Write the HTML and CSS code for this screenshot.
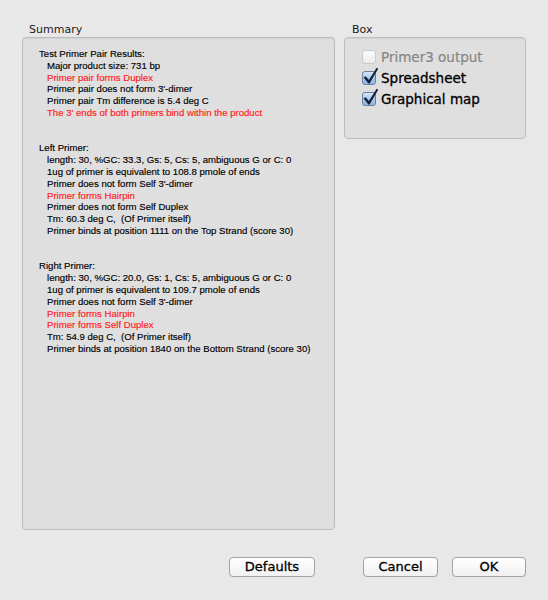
FILE: index.html
```html
<!DOCTYPE html>
<html lang="en">

<head>
    <meta charset="UTF-8">
    <meta name="viewport" content="width=device-width, initial-scale=1.0">
    <title>Test Primer Pair</title>
    <link rel="stylesheet" href="styles.css">
</head>

<body>
    <div class="dialog">
        <div class="panels">
            <section class="group group-summary">
                <div class="group-label">Summary</div>
                <div class="frame summary">
                    <div class="line">Test Primer Pair Results:</div>
                    <div class="line sub">Major product size: 731 bp</div>
                    <div class="line sub warn">Primer pair forms Duplex</div>
                    <div class="line sub">Primer pair does not form 3'-dimer</div>
                    <div class="line sub">Primer pair Tm difference is 5.4 deg C</div>
                    <div class="line sub warn">The 3' ends of both primers bind within the product</div>
                    <div class="line"></div>
                    <div class="line"></div>
                    <div class="line">Left Primer:</div>
                    <div class="line sub">length: 30, %GC: 33.3, Gs: 5, Cs: 5, ambiguous G or C: 0</div>
                    <div class="line sub">1ug of primer is equivalent to 108.8 pmole of ends</div>
                    <div class="line sub">Primer does not form Self 3'-dimer</div>
                    <div class="line sub warn">Primer forms Hairpin</div>
                    <div class="line sub">Primer does not form Self Duplex</div>
                    <div class="line sub">Tm: 60.3 deg C,&nbsp; (Of Primer itself)</div>
                    <div class="line sub">Primer binds at position 1111 on the Top Strand (score 30)</div>
                    <div class="line"></div>
                    <div class="line"></div>
                    <div class="line">Right Primer:</div>
                    <div class="line sub">length: 30, %GC: 20.0, Gs: 1, Cs: 5, ambiguous G or C: 0</div>
                    <div class="line sub">1ug of primer is equivalent to 109.7 pmole of ends</div>
                    <div class="line sub">Primer does not form Self 3'-dimer</div>
                    <div class="line sub warn">Primer forms Hairpin</div>
                    <div class="line sub warn">Primer forms Self Duplex</div>
                    <div class="line sub">Tm: 54.9 deg C,&nbsp; (Of Primer itself)</div>
                    <div class="line sub">Primer binds at position 1840 on the Bottom Strand (score 30)</div>
                </div>
            </section>

            <section class="group group-box">
                <div class="group-label">Box</div>
                <div class="frame options">
                    <label class="option disabled">
                        <span class="check"></span>
                        <span>Primer3 output</span>
                    </label>
                    <label class="option">
                        <span class="check on">
                            <svg class="tick" width="14" height="14" viewBox="0 0 14 14">
                                <path d="M1.6 6.6 L3.6 5.2 L6.9 9.0 L14.6 -3.2 L16.2 -2.2 L7.6 12.4 L6.4 12.4 Z" />
                            </svg>
                        </span>
                        <span>Spreadsheet</span>
                    </label>
                    <label class="option">
                        <span class="check on">
                            <svg class="tick" width="14" height="14" viewBox="0 0 14 14">
                                <path d="M1.6 6.6 L3.6 5.2 L6.9 9.0 L14.6 -3.2 L16.2 -2.2 L7.6 12.4 L6.4 12.4 Z" />
                            </svg>
                        </span>
                        <span>Graphical map</span>
                    </label>
                </div>
            </section>
        </div>

        <div class="buttons">
            <button class="btn btn-defaults">Defaults</button>
            <button class="btn btn-cancel">Cancel</button>
            <button class="btn btn-ok">OK</button>
        </div>
    </div>
</body>

</html>
```

FILE: styles.css
```css
body {
    margin: 0;
    background-color: #e8e8e8;
    font-family: "DejaVu Sans", sans-serif;
    color: #000;
}

.dialog {
    padding: 23px 22px 0 22px;
}

.panels {
    display: flex;
    gap: 9px;
}

.group-summary {
    width: 313px;
}

.group-box {
    width: 182px;
}

.group-label {
    font-size: 11px;
    line-height: 13px;
    margin-bottom: 1px;
    padding-left: 7px;
    color: #1a1a1a;
}

.group-box .group-label {
    padding-left: 8px;
}

.frame {
    box-sizing: border-box;
    border: 1px solid #bcbcbc;
    border-radius: 4px;
    background-color: #dfdfdf;
    box-shadow: inset 0 1px 1px rgba(0, 0, 0, 0.06);
}

.summary {
    height: 493px;
    padding: 10px 0 0 16px;
    font-family: "Liberation Sans", Arial, sans-serif;
    font-size: 9.6px;
    white-space: nowrap;
    -webkit-text-stroke: 0.15px #000;
}

.line {
    height: 11.8px;
    line-height: 11.8px;
}

.sub {
    padding-left: 8px;
}

.warn {
    color: #ff1a1a;
    -webkit-text-stroke: 0.15px #ff1a1a;
}

.options {
    height: 102px;
    padding: 8px 0 0 17px;
}

.option {
    display: flex;
    align-items: center;
    gap: 5px;
    height: 21px;
    font-size: 13.5px;
    -webkit-text-stroke: 0.3px #000;
}

.option.disabled {
    color: #868686;
    -webkit-text-stroke: 0.2px #868686;
}

.check {
    position: relative;
    width: 14px;
    height: 14px;
    box-sizing: border-box;
    border: 1px solid #c9c9c9;
    border-radius: 3px;
    background: linear-gradient(#fbfbfb, #ececec);
}

.check.on {
    border-color: #6c7f9e;
    background: linear-gradient(#d6e6f8, #a9c9ee 50%, #8cb6e8);
}

.tick {
    position: absolute;
    left: -1px;
    top: -1px;
    overflow: visible;
}

.tick path {
    fill: #17203a;
}

.buttons {
    display: flex;
    justify-content: flex-end;
    margin-top: 27px;
}

.btn {
    height: 20px;
    box-sizing: border-box;
    padding: 0;
    border: 1px solid #a2a2a2;
    border-radius: 4px;
    background: linear-gradient(#ffffff, #f1f1f1);
    box-shadow: 0 1px 0 rgba(0, 0, 0, 0.06);
    font-family: "DejaVu Sans", sans-serif;
    font-size: 13px;
    line-height: 18px;
    color: #000;
    -webkit-text-stroke: 0.3px #000;
}

.btn-defaults {
    width: 86px;
    margin-right: 48px;
}

.btn-cancel {
    width: 75px;
    margin-right: 14px;
}

.btn-ok {
    width: 74px;
}
```
